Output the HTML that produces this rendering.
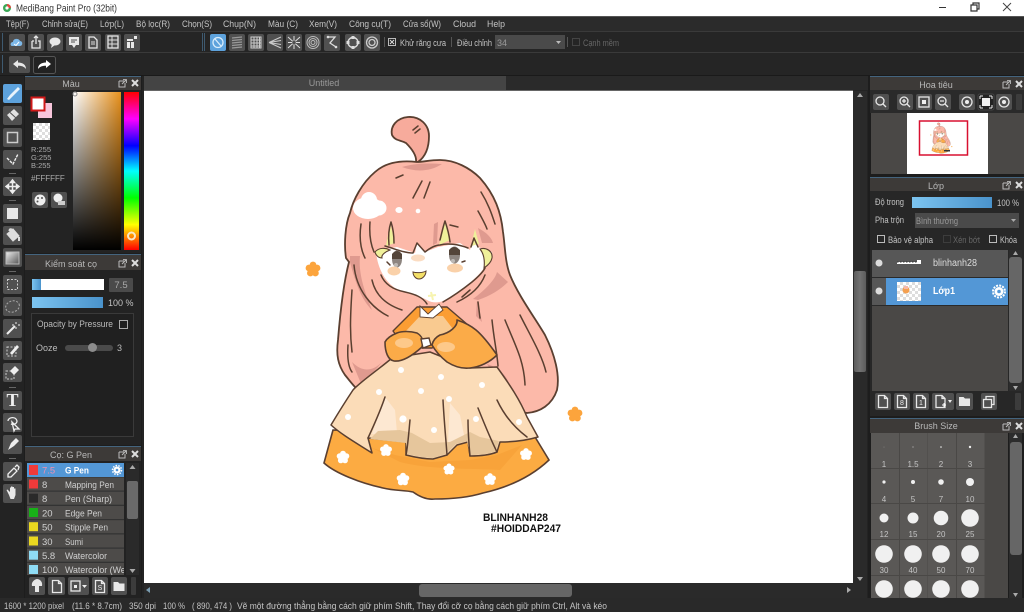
<!DOCTYPE html>
<html lang="vi"><head><meta charset="utf-8"><title>MediBang Paint Pro</title>
<style>
html,body{margin:0;padding:0;width:1024px;height:612px;overflow:hidden;background:#252525}
svg{display:block}
body>svg{filter:blur(.3px)}
text{font-family:"Liberation Sans","Noto Sans CJK JP",sans-serif;font-size:9px;fill:#c4c4c4}
.m{text-anchor:middle}
.t{fill:#b8b8b8;font-size:9px;text-anchor:middle}
.ic{fill:none;stroke:#e8e8e8;stroke-width:1.3}
.f{fill:#e8e8e8;stroke:none}
.l{fill:none;stroke:#5a3f30;stroke-width:1.5;stroke-linecap:round;stroke-linejoin:round}
.b{fill:#505050}
.row{fill:#4d4b49}
.n{font-size:9.5px;fill:#d0d0d0}
</style></head><body>
<svg width="1024" height="612" viewBox="0 0 1024 612" xmlns="http://www.w3.org/2000/svg">
<defs>
<linearGradient id="blue" x1="0" x2="1" y1="0" y2="0"><stop offset="0" stop-color="#7cc4f0"/><stop offset="1" stop-color="#4a93cc"/></linearGradient>
<linearGradient id="sv" x1="0" x2="1" y1="0" y2="0"><stop offset="0" stop-color="#fff"/><stop offset="1" stop-color="#e8911c"/></linearGradient>
<linearGradient id="bk" x1="0" x2="0" y1="0" y2="1"><stop offset="0" stop-color="#000" stop-opacity="0"/><stop offset="1" stop-color="#000"/></linearGradient>
<linearGradient id="hue" x1="0" x2="0" y1="0" y2="1"><stop offset="0" stop-color="#f00"/><stop offset=".17" stop-color="#f0f"/><stop offset=".34" stop-color="#00f"/><stop offset=".5" stop-color="#0ff"/><stop offset=".67" stop-color="#0f0"/><stop offset=".84" stop-color="#ff0"/><stop offset="1" stop-color="#f00"/></linearGradient>
<linearGradient id="gr" x1="0" x2="1" y1="0" y2="1"><stop offset="0" stop-color="#eee"/><stop offset="1" stop-color="#555"/></linearGradient>
<linearGradient id="th" x1="0" x2="1" y1="0" y2="0"><stop offset="0" stop-color="#5c5c5c"/><stop offset=".5" stop-color="#727272"/><stop offset="1" stop-color="#5c5c5c"/></linearGradient>
<pattern id="chk" width="6" height="6" patternUnits="userSpaceOnUse"><rect width="6" height="6" fill="#fff"/><rect width="3" height="3" fill="#ddd"/><rect x="3" y="3" width="3" height="3" fill="#ddd"/></pattern>
<g id="popx"><path d="M0 2H5M0 2V8H6V4" fill="none" stroke="#bbb" stroke-width="1"/><path d="M3 5L7 1M4 0.6H7.4V4" fill="none" stroke="#bbb" stroke-width="1"/><path d="M13 1L19 7M19 1L13 7" stroke="#ddd" stroke-width="2"/></g>
<g id="flower"><circle cx="0" cy="-4" r="3.4"/><circle cx="4" cy="-1" r="3.4"/><circle cx="2.4" cy="4" r="3.4"/><circle cx="-2.6" cy="4" r="3.4"/><circle cx="-4" cy="-1" r="3.4"/><circle r="3"/></g>
<g id="page"><path d="M4 2.5H10L13 5.5V14.5H4Z M10 2.5V5.5H13" class="ic"/></g>
<g id="folder"><path class="f" d="M3 4H7.5L9 5.5H14V13H3Z"/></g>

<g id="art">
  <!-- ahoge -->
  <path d="M416 162C417 155 411 148 406 143C401 140 395 141 392 135C390 126 397 118 408 117C420 116 429 125 429 136C429 148 425 157 418 162Z" fill="#f7ab9c" stroke="#5a3f30" stroke-width="1.8"/>
  <path d="M413 130L418 126M415 133L420 129" class="l" stroke-width="1"/>
  <!-- hair -->
  <path d="M417 162C400 160 385 163 375 172C362 183 353 200 350 213C345 225 344 245 346 258L349 262C343 285 340 315 338 340C336 355 338 365 345 375C350 381 352 384 356 388L527 413C540 412 552 405 557 390C560 375 555 355 545 335C535 318 518 295 510 275C505 262 505 245 503 232C501 212 495 195 480 178C470 168 455 160 440 160C430 160 423 162 417 162Z" fill="#fcb9a9" stroke="#5a3f30" stroke-width="1.8"/>
  <path d="M402 167C415 172 430 172 442 164C430 163 415 163 402 167ZM352 362C362 372 372 372 382 362L362 386ZM487 364C500 368 510 378 510 390L495 378ZM350 256L360 256C358 275 366 295 372 310C362 300 356 285 350 262ZM473 299C485 290 495 280 497 272L508 282C500 290 490 296 478 300ZM477 300L482 322L476 316ZM434 224L438 222L437 243L433 245ZM478 228C486 232 492 238 493 243L482 243Z" fill="#df9a8f"/>
  <!-- hair strands -->
  <path class="l" d="M396 178L403 175M413 198L422 181M424 198L430 182M481 192C489 205 492 215 495 224M478 211C483 220 486 226 487 229M361 224C359 238 361 250 365 258M370 222C369 235 371 245 374 252M354 265C356 290 372 308 388 316M372 280C376 298 390 306 402 310M352 290C350 320 350 335 352 352M348 345C347 360 349 368 352 372M492 320C494 340 497 352 498 366M505 320C515 345 524 360 525 385M520 315C530 335 542 355 546 372M478 302L480 318M470 290L462 297M485 275C480 288 470 296 457 302"/>
  <!-- skirt bottom -->
  <path d="M333 430L324 463C335 473 360 483 383 488C395 491 405 490 413 492C420 497 428 500 435 499C455 499 470 497 483 493C505 488 530 478 549 460L532 432Z" fill="#fcab42" stroke="#5a3f30" stroke-width="1.6"/>
  <path d="M372 448L395 455L430 462L470 460L497 455L522 445L500 470C470 468 430 470 400 462Z" fill="#f59f36" opacity=".6"/>
  <!-- skirt -->
  <path d="M392 358C378 370 360 382 353 390C345 402 337 415 331 425C342 435 358 444 372 453L368 438L406 442L406 455C418 458 428 459 433 459L447 455L457 445L468 442L470 456C480 456 490 455 497 452L500 442C515 442 528 440 538 437L527 417C520 400 510 385 497 367L470 368L430 352Z" fill="#fbdcb8" stroke="#5a3f30" stroke-width="1.5" stroke-linejoin="round"/>
  <path d="M385 397L372 434L397 433L395 410ZM450 403L448 442L465 440L460 415Z" fill="#fde8d2"/>
  <path d="M370 439L406 443L407 454C418 457 428 458 433 458L446 454L456 444L467 441L470 455C480 455 490 454 496 451C497 447 498 444 499 441L480 437L470 432L450 442L430 443L412 433L400 430L378 431Z" fill="#e6c69c"/>
  <path class="l" stroke-width="1.2" d="M385 397C380 412 374 425 368 438M410 420C409 430 408 445 406 455M443 400C444 420 446 440 447 455M468 420C468 432 469 445 470 456M478 408C484 423 490 438 497 452M497 400C504 415 515 428 527 437"/>
  <!-- flowers skirt -->
  <g fill="#fff"><use href="#flower" transform="translate(343 457) scale(.85)"/><use href="#flower" transform="translate(386 450) scale(.8)"/><use href="#flower" transform="translate(449 469) scale(.75)"/><use href="#flower" transform="translate(403 479) scale(.85)"/><use href="#flower" transform="translate(490 479) scale(.8)"/><use href="#flower" transform="translate(526 454) scale(.8)"/>
  <circle cx="401" cy="370" r="3"/><circle cx="441" cy="377" r="3"/><circle cx="482" cy="385" r="3"/><circle cx="379" cy="392" r="3"/><circle cx="421" cy="391" r="3"/><circle cx="449" cy="399" r="3"/><circle cx="348" cy="417" r="3"/><circle cx="403" cy="419" r="3.6"/><circle cx="476" cy="419" r="3"/><circle cx="434" cy="430" r="3"/><circle cx="519" cy="422" r="3"/></g>
  <!-- shoulders and torso -->
  <path d="M417 307L393 331L400 340L422 348L432 348L457 335L475 331L447 307Z" fill="#fb9d33" stroke="#5a3f30" stroke-width="1.4" stroke-linejoin="round"/>
  <path d="M420 316L443 316L456 333L434 345L422 345L405 332Z" fill="#f9ca90"/>
  <path d="M420 306L428 314L439 304L443 310L433 318L420 317Z" fill="#fff" stroke="#5a3f30" stroke-width=".9"/>
  <!-- sleeves -->
  <path d="M385 342C385 352 388 360 394 361C402 362 412 356 422 347C424 340 422 336 417 333C410 331 402 331 397 333C392 335 387 338 385 342Z" fill="#fbab48" stroke="#5a3f30" stroke-width="1.6" stroke-linejoin="round"/>
  <path d="M432 345C436 352 442 358 447 362C455 367 462 369 470 368C480 367 490 362 497 355C490 345 482 335 476 330C470 325 463 322 457 320C458 326 450 333 440 335C436 337 433 340 432 345Z" fill="#fbab48" stroke="#5a3f30" stroke-width="1.6" stroke-linejoin="round"/>
  <ellipse cx="404" cy="343" rx="9" ry="5" fill="#fdc98a"/><ellipse cx="446" cy="347" rx="9" ry="5" fill="#fdc98a"/>
  <path d="M421 339L429 338L431 345L423 348Z" fill="#fff" stroke="#5a3f30" stroke-width="1.4"/>
  <!-- face -->
  <path d="M376 251L397 247L415 253L417 243L425 252L438 247L460 243L470 250L474 238L478 247L492 252C493 260 488 266 484 268C476 280 455 295 443 301C438 303 432 303 427 300C418 295 405 293 395 288C383 280 377 265 376 251Z" fill="#fff"/>
  <path d="M375 252C379 247 386 248 390 250C385 252 381 255 382 258C379 258 376 256 375 252ZM480 249C486 247 493 251 492 258C491 263 487 266 484 268C485 260 484 254 480 249Z" fill="#eff09a" stroke="#5a3f30" stroke-width="1.1"/>
  <path d="M390 223L395 243L386 246ZM445 221L450 240L439 245ZM475 229L479 244L471 246Z" fill="#eff09a"/>
  <path d="M385 246C393 248 403 253 413 253L417 243L425 252C430 248 436 245 440 245C447 243 458 244 468 248M471 247L474 238L478 247" class="l" stroke-width="1.6"/>
  <path d="M389 245C388 235 389 228 391 222M394 243C394 235 393 228 391 222M440 240C442 232 443 227 445 221M450 242C449 233 447 227 445 221M450 225L458 227" class="l" stroke-width="1.1"/>
  <!-- eyes -->
  <ellipse cx="397" cy="259" rx="5" ry="8.500" fill="#8d8580"/><path d="M392 254C395 250 399 250 402 254L402 259L392 259Z" fill="#54453a"/><circle cx="396" cy="265" r="2" fill="#bdb9b5"/>
  <ellipse cx="454.500" cy="255" rx="5.500" ry="8.500" fill="#8d8580"/><path d="M449 250C452 246 456 246 460 250L460 255L449 255Z" fill="#54453a"/><circle cx="453" cy="261" r="2" fill="#bdb9b5"/>
  <path d="M387 262L390 265M462 262L465 261" class="l" stroke-width="1"/>
  <ellipse cx="394" cy="271" rx="6.500" ry="4.500" fill="#fad1a9"/><ellipse cx="455" cy="268" rx="8" ry="4.500" fill="#fad1a9"/><ellipse cx="418" cy="258" rx="7" ry="3.500" fill="#fbdcc2"/>
  <path d="M413 272C416 273 423 273 426 271C426 276 422 279 419 279C416 279 413 276 413 272Z" fill="#f4e068" stroke="#5a3f30" stroke-width="1"/>
  <path d="M431 292L433 300M428 296L436 295" stroke="#f7f4b0" stroke-width="2"/>
  <!-- face border locks -->
  <path class="l" stroke-width="1.6" d="M381 275C385 285 395 290 405 292C414 294 423 297 427 304M443 302C450 298 462 290 472 282C478 277 483 272 485 268"/>
  <!-- highlights -->
  <g fill="#fff"><ellipse cx="368" cy="208" rx="15" ry="11"/><circle cx="369" cy="200" r="8"/><circle cx="379" cy="208" r="7.500"/><ellipse cx="399" cy="210" rx="3.600" ry="3"/><circle cx="418" cy="211" r="2.300"/></g>
  <use href="#flower" fill="#fca43c" transform="translate(313 269)"/>
  <use href="#flower" fill="#fca43c" transform="translate(575 414)"/>
</g>
</defs>

<rect width="1024" height="612" fill="#242424"/>
<!-- title bar -->
<rect width="1024" height="16" fill="#fff"/>
<circle cx="7" cy="8" r="4" fill="#3aa856"/><path d="M7 4A4 4 0 0 1 11 8L7 8Z" fill="#e0483e"/><circle cx="7" cy="8" r="1.6" fill="#fff"/>
<text x="16" y="11.5" textLength="101" lengthAdjust="spacingAndGlyphs" style="font-size:10px;fill:#333">MediBang Paint Pro (32bit)</text>
<path d="M939 7.5H946" stroke="#333" stroke-width="1"/>
<path d="M971 5H977V11H971ZM973 5V3H979V9H977" fill="none" stroke="#333" stroke-width="1.2"/>
<path d="M1003 3L1011 11M1011 3L1003 11" stroke="#444" stroke-width="1"/>

<!-- menu -->
<rect y="16" width="1024" height="1" fill="#555"/>
<rect y="17" width="1024" height="15" fill="#2b2b2b"/>
<rect y="31" width="1024" height="1" fill="#3a3a3a"/>
<text x="6" y="27" textLength="23" lengthAdjust="spacingAndGlyphs" style="font-size:9.5px">Tệp(F)</text>
<text x="42" y="27" textLength="46" lengthAdjust="spacingAndGlyphs" style="font-size:9.5px">Chỉnh sửa(E)</text>
<text x="100" y="27" textLength="24" lengthAdjust="spacingAndGlyphs" style="font-size:9.5px">Lớp(L)</text>
<text x="136" y="27" textLength="34" lengthAdjust="spacingAndGlyphs" style="font-size:9.5px">Bộ lọc(R)</text>
<text x="182" y="27" textLength="30" lengthAdjust="spacingAndGlyphs" style="font-size:9.5px">Chọn(S)</text>
<text x="223" y="27" textLength="33" lengthAdjust="spacingAndGlyphs" style="font-size:9.5px">Chụp(N)</text>
<text x="268" y="27" textLength="30" lengthAdjust="spacingAndGlyphs" style="font-size:9.5px">Màu (C)</text>
<text x="309" y="27" textLength="28" lengthAdjust="spacingAndGlyphs" style="font-size:9.5px">Xem(V)</text>
<text x="349" y="27" textLength="42" lengthAdjust="spacingAndGlyphs" style="font-size:9.5px">Công cụ(T)</text>
<text x="403" y="27" textLength="38" lengthAdjust="spacingAndGlyphs" style="font-size:9.5px">Cửa sổ(W)</text>
<text x="453" y="27" textLength="23" lengthAdjust="spacingAndGlyphs" style="font-size:9.5px">Cloud</text>
<text x="487" y="27" textLength="18" lengthAdjust="spacingAndGlyphs" style="font-size:9.5px">Help</text>

<!-- toolbar row 1 -->
<rect y="32" width="1024" height="20" fill="#252525"/>
<rect y="52" width="1024" height="1" fill="#3a3a3a"/>
<rect x="2" y="33" width="1" height="18" fill="#3e5a70"/><rect x="202" y="33" width="1" height="18" fill="#3e5a70"/><rect x="204" y="33" width="1" height="18" fill="#3e5a70"/>
<rect x="9" y="34" width="16" height="17" rx="2" class="b"/><rect x="28" y="34" width="16" height="17" rx="2" class="b"/><rect x="47" y="34" width="16" height="17" rx="2" class="b"/><rect x="66" y="34" width="16" height="17" rx="2" class="b"/><rect x="85" y="34" width="16" height="17" rx="2" class="b"/><rect x="105" y="34" width="16" height="17" rx="2" class="b"/><rect x="124" y="34" width="16" height="17" rx="2" class="b"/>
<path d="M12 46C10 46 10 42 13 42C13 38 19 38 20 41C23 41 23 46 20 46Z" fill="#7db8e8"/><path d="M14 44L16 45.5L19 42" stroke="#fff" fill="none"/>
<path d="M32 41H34M38 41H40V48H32V41M36 44V36M34 38L36 36L38 38" class="ic" stroke-width="1.1"/>
<ellipse cx="55" cy="41.5" rx="5.5" ry="4" class="f"/><path class="f" d="M52 44L51 48L55 45Z"/>
<rect x="69" y="37" width="10" height="8" class="f"/><path class="f" d="M72 45L74 48L76 45Z"/><path d="M71 40H77M71 42H75" stroke="#505050"/>
<path d="M89 37H94L97 40V48H89Z" class="ic" stroke-width="1.1"/><path d="M91 42H95M91 44H95" stroke="#ddd"/>
<rect x="108" y="36" width="10" height="12" class="ic" stroke-width="1"/><path d="M108 40H118M108 44H118M112 36V48" stroke="#ddd" stroke-width="1"/>
<path class="f" d="M127 39H133V41H127ZM127 42H130V48H127ZM131 42H134V48H131ZM134 36L137 36L137 39L134 39Z"/>

<rect x="210" y="34" width="16" height="17" rx="2" fill="#5da2dc"/><circle cx="218" cy="42.5" r="5" fill="none" stroke="#d8ecfb" stroke-width="1.3"/><path d="M215 39L221 46" stroke="#d8ecfb" stroke-width="1.3"/>
<rect x="229" y="34" width="16" height="17" rx="2" class="b"/><path d="M232 38L242 37M232 40.5L242 39.5M232 43L242 42M232 45.5L242 44.5M232 48L242 47" stroke="#999" stroke-width="1.2"/>
<rect x="248" y="34" width="16" height="17" rx="2" class="b"/><path d="M251 37H261V48H251ZM251 40H261M251 43H261M251 46H261M254 37V48M257 37V48M259.5 37V48" fill="none" stroke="#ccc" stroke-width="1"/>
<rect x="267" y="34" width="16" height="17" rx="2" class="b"/><path d="M269 42.5L281 37M269 42.5L281 40.5M269 42.5L281 44.5M269 42.5L281 48" stroke="#ccc"/>
<rect x="286" y="34" width="16" height="17" rx="2" class="b"/><path d="M288 37L300 48M300 37L288 48M294 36V49M288 42.5H300" stroke="#ddd"/><circle cx="294" cy="42.5" r="1.8" fill="#505050"/>
<rect x="305" y="34" width="16" height="17" rx="2" class="b"/><circle cx="313" cy="42.5" r="6" fill="none" stroke="#bbb"/><circle cx="313" cy="42.5" r="4" fill="none" stroke="#bbb"/><circle cx="313" cy="42.5" r="2" fill="none" stroke="#bbb"/>
<rect x="324" y="34" width="16" height="17" rx="2" class="b"/><path d="M328 37H335L330 43L336 47" fill="none" stroke="#ddd" stroke-width="1.3"/><circle cx="328" cy="37" r="1.3" fill="#ddd"/><circle cx="336" cy="47" r="1.3" fill="#ddd"/>
<rect x="345" y="34" width="16" height="17" rx="2" class="b"/><circle cx="353" cy="42.5" r="5" fill="none" stroke="#ddd" stroke-width="1.4"/><g fill="#ddd"><rect x="351.5" y="36" width="3" height="3"/><rect x="351.5" y="46" width="3" height="3"/><rect x="346.5" y="41" width="3" height="3"/><rect x="356.5" y="41" width="3" height="3"/></g>
<rect x="364" y="34" width="16" height="17" rx="2" class="b"/><circle cx="372" cy="42.5" r="5.5" fill="none" stroke="#ccc" stroke-width="1.3"/><circle cx="372" cy="42.5" r="3" fill="none" stroke="#ccc" stroke-width="1.3"/>
<rect x="384" y="37" width="1" height="10" fill="#555"/>
<rect x="388.5" y="38.5" width="7" height="7" fill="none" stroke="#bbb"/><path d="M390 40L394 44M394 40L390 44" stroke="#ddd"/>
<text x="400" y="46" textLength="46" lengthAdjust="spacingAndGlyphs" style="font-size:9px">Khử răng cưa</text>
<rect x="451" y="37" width="1" height="10" fill="#555"/>
<text x="457" y="46" textLength="35" lengthAdjust="spacingAndGlyphs" style="font-size:9px">Điều chỉnh</text>
<rect x="495" y="35" width="70" height="14" fill="#4a4a4a"/><text x="497" y="46" style="fill:#999">34</text><path d="M556 41H561L558.5 44Z" fill="#bbb"/>
<rect x="567" y="37" width="1" height="10" fill="#555"/>
<rect x="572.5" y="38.5" width="7" height="7" fill="none" stroke="#444"/>
<text x="583" y="46" textLength="36" lengthAdjust="spacingAndGlyphs" style="font-size:9px;fill:#666">Cạnh mềm</text>

<!-- toolbar row 2 -->
<rect y="53" width="1024" height="22" fill="#252525"/>
<rect x="2" y="55" width="1" height="18" fill="#3e5a70"/>
<rect x="9" y="56" width="21" height="17" rx="2" class="b"/>
<path class="f" d="M13 64L18 60V62.5C23 62.5 26 65 26 69C24 66.5 21.5 65.8 18 65.8V68Z"/>
<rect x="33.5" y="56.5" width="22" height="17" rx="2" fill="#222" stroke="#555"/>
<path d="M51 64L46 60V62.5C41 62.5 38 65 38 69C40 66.5 42.5 65.8 46 65.8V68Z" fill="#fff"/>
<rect y="75" width="1024" height="1" fill="#1a1a1a"/>

<!-- tools column -->
<rect x="0" y="76" width="24" height="522" fill="#232323"/>
<rect x="3" y="84" width="19" height="19" rx="2" fill="#5da2dc"/>
<path d="M7 99L10 95L18 87L20 89L12 97L9 100Z" fill="#e8f3fb"/>
<g class="b">
<rect x="3" y="106" width="19" height="19" rx="2"/><rect x="3" y="128" width="19" height="19" rx="2"/><rect x="3" y="150" width="19" height="19" rx="2"/><rect x="3" y="177" width="19" height="19" rx="2"/><rect x="3" y="204" width="19" height="19" rx="2"/><rect x="3" y="226" width="19" height="19" rx="2"/><rect x="3" y="248" width="19" height="19" rx="2"/><rect x="3" y="275" width="19" height="19" rx="2"/><rect x="3" y="297" width="19" height="19" rx="2"/><rect x="3" y="319" width="19" height="19" rx="2"/><rect x="3" y="341" width="19" height="19" rx="2"/><rect x="3" y="363" width="19" height="19" rx="2"/><rect x="3" y="391" width="19" height="19" rx="2"/><rect x="3" y="413" width="19" height="19" rx="2"/><rect x="3" y="435" width="19" height="19" rx="2"/><rect x="3" y="462" width="19" height="19" rx="2"/><rect x="3" y="484" width="19" height="19" rx="2"/>
</g>
<g fill="#666"><rect x="9" y="173" width="7" height="1"/><rect x="9" y="200" width="7" height="1"/><rect x="9" y="271" width="7" height="1"/><rect x="9" y="387" width="7" height="1"/><rect x="9" y="458" width="7" height="1"/></g>
<path d="M7 115L14 109L19 114L12 121ZM7 115L12 121" fill="#e0e0e0"/><path d="M10 112.5L16 118" stroke="#505050"/>
<rect x="7.5" y="132.5" width="10" height="10" fill="none" stroke="#ccc" stroke-width="1.5"/>
<path d="M7 158L10 161L13 164L18 154" fill="none" stroke="#eee" stroke-width="1.4" stroke-dasharray="3 1"/>
<path d="M12.5 180V193M6 186.5H19M12.5 180L10.5 182.5H14.5ZM12.5 193L10.5 190.5H14.5ZM6 186.5L8.5 184.5V188.5ZM19 186.5L16.5 184.5V188.5Z" stroke="#eee" stroke-width="1.5" fill="#eee"/>
<rect x="7" y="208" width="11" height="11" fill="#e8e8e8"/>
<path d="M7 234L13 229L19 236L13 241ZM9 231C9 228 12 228 13 231" fill="#ddd" stroke="#ddd"/><path d="M19 237V241" stroke="#ddd" stroke-width="2"/>
<rect x="6" y="252" width="13" height="12" fill="url(#gr)" stroke="#bbb"/>
<rect x="7.5" y="279.5" width="10" height="10" fill="none" stroke="#ccc" stroke-dasharray="2 1.5"/>
<ellipse cx="12.5" cy="306.5" rx="7" ry="5.5" fill="none" stroke="#aaa" stroke-dasharray="2 1.5" transform="rotate(-20 12.5 306.5)"/>
<path d="M7 334L15 326" stroke="#eee" stroke-width="2"/><path d="M16 322V324M16 327V329M12 325H14M18 325H20" stroke="#eee"/>
<rect x="7" y="347" width="9" height="9" fill="none" stroke="#ccc" stroke-dasharray="2 1.5"/><path d="M10 353L17 345L19 347L12 355Z" fill="#eee"/>
<rect x="6" y="371" width="8" height="8" fill="none" stroke="#ccc" stroke-dasharray="2 1.5"/><path d="M10 371L15 366L19 370L14 375Z" fill="#eee"/>
<text x="12.5" y="406" style="font-family:'Liberation Serif',serif;font-weight:bold;font-size:18px;fill:#f0f0f0;text-anchor:middle">T</text>
<path d="M8 421C8 417 16 416 17 421C17 424 13 425 11 424M12 422L19 429L15 429L14 431Z" fill="none" stroke="#eee" stroke-width="1.3"/>
<path d="M8 450L11 443L16 438L19 441L14 446Z" fill="#eee"/>
<path d="M8 477L8 474L14 468L17 471L11 477ZM15 467L17 465L19 467L18 470" fill="none" stroke="#eee" stroke-width="1.3"/>
<path class="f" d="M9 495L6.5 490L7.5 489.5L10 492V487.5H11V491.5V486.5H12.5V491.5V487H14V492V488.5H15.5V495L14 499H10.5Z"/>

<!-- left panels -->
<rect x="24" y="76" width="118" height="522" fill="#1d1d1d"/>
<rect x="25" y="76" width="116" height="1" fill="#44647e"/>
<rect x="25" y="77" width="116" height="13" fill="#3d3a38"/>
<text class="t" x="71" y="87">Màu</text><use href="#popx" x="119" y="79"/>
<rect x="25" y="90" width="116" height="163" fill="#232323"/>
<rect x="38" y="103" width="14" height="15" fill="#f8c6dc"/>
<rect x="31.5" y="97.5" width="13" height="13" fill="#fff" stroke="#d01818" stroke-width="2"/>
<rect x="33" y="123" width="17" height="17" fill="url(#chk)"/>
<text x="31" y="152" style="font-size:7.5px;fill:#aaa">R:255</text><text x="31" y="160" style="font-size:7.5px;fill:#aaa">G:255</text><text x="31" y="168" style="font-size:7.5px;fill:#aaa">B:255</text><text x="31" y="181" style="font-size:8px;fill:#aaa">#FFFFFF</text>
<rect x="32" y="192" width="16" height="16" rx="2" class="b"/><rect x="51" y="192" width="16" height="16" rx="2" class="b"/>
<circle cx="40" cy="200" r="5.5" fill="#eee"/><circle cx="38" cy="198" r="1" fill="#555"/><circle cx="42" cy="198" r="1" fill="#555"/><circle cx="37.5" cy="201.5" r="1" fill="#555"/>
<circle cx="58" cy="198" r="4.5" fill="#eee"/><rect x="58" y="201" width="7" height="4" fill="#ccc"/>
<rect x="73" y="92" width="48" height="158" fill="url(#sv)"/><rect x="73" y="92" width="48" height="158" fill="url(#bk)"/>
<circle cx="75" cy="94" r="2" fill="none" stroke="#888"/>
<rect x="124" y="92" width="15" height="158" fill="url(#hue)"/>
<circle cx="131.5" cy="236" r="3.5" fill="none" stroke="#f7e9c8" stroke-width="2"/>

<rect x="25" y="254" width="116" height="1" fill="#44647e"/>
<rect x="25" y="255" width="116" height="15" fill="#3d3a38"/>
<text class="t" x="71" y="267">Kiểm soát cọ</text><use href="#popx" x="119" y="259"/>
<rect x="25" y="270" width="116" height="175" fill="#232323"/>
<rect x="32" y="279" width="72" height="11" fill="#fff"/><rect x="32" y="279" width="9" height="11" fill="url(#blue)"/>
<rect x="109" y="278" width="24" height="14" rx="1" fill="#4a4a4a"/><text class="m" x="121" y="288" style="font-size:9.5px;fill:#aaa">7.5</text>
<rect x="32" y="297" width="71" height="11" fill="url(#blue)"/><text x="108" y="306" style="font-size:9px">100 %</text>
<rect x="31.5" y="313.5" width="102" height="123" fill="#202020" stroke="#3a3a3a"/>
<text x="37" y="327" textLength="76" lengthAdjust="spacingAndGlyphs" style="font-size:9px;fill:#bbb">Opacity by Pressure</text>
<rect x="119.5" y="320.5" width="8" height="8" fill="none" stroke="#aaa"/>
<text x="36" y="351" style="font-size:9px;fill:#bbb">Ooze</text>
<rect x="65" y="345" width="48" height="6" rx="3" fill="#4a4a4a"/><circle cx="92.5" cy="347.5" r="4.5" fill="#8c8c8c"/>
<text x="117" y="351" style="font-size:9px;fill:#bbb">3</text>

<rect x="25" y="446" width="116" height="1" fill="#44647e"/>
<rect x="25" y="447" width="116" height="14" fill="#3d3a38"/>
<text class="t" x="71" y="458">Cọ: G Pen</text><use href="#popx" x="119" y="450"/>
<rect x="25" y="461" width="116" height="137" fill="#222"/>
<rect x="27" y="463" width="97" height="112" fill="#333"/>
<g class="row"><rect x="27" y="477.5" width="97" height="13"/><rect x="27" y="491.7" width="97" height="13"/><rect x="27" y="506" width="97" height="13"/><rect x="27" y="520.2" width="97" height="13"/><rect x="27" y="534.5" width="97" height="13"/><rect x="27" y="548.7" width="97" height="13"/><rect x="27" y="563" width="97" height="12"/></g>
<rect x="27" y="463" width="97" height="14" fill="#5397d6"/>
<rect x="29" y="465" width="9" height="10" fill="#f03a3a"/><rect x="29" y="479.5" width="9" height="9" fill="#f03a3a"/><rect x="29" y="493.7" width="9" height="9" fill="#2a2a2a"/><rect x="29" y="508" width="9" height="9" fill="#18b018"/><rect x="29" y="522.2" width="9" height="9" fill="#ead820"/><rect x="29" y="536.5" width="9" height="9" fill="#ead820"/><rect x="29" y="550.7" width="9" height="9" fill="#8fdcf5"/><rect x="29" y="565" width="9" height="9" fill="#8fdcf5"/>
<text x="42" y="473.5" class="n" style="fill:#f090b0">7.5</text><text x="65" y="473.5" class="n" textLength="24" lengthAdjust="spacingAndGlyphs" style="fill:#fff;font-weight:bold">G Pen</text>
<text x="42" y="488" class="n">8</text><text x="65" y="488" class="n" textLength="49" lengthAdjust="spacingAndGlyphs">Mapping Pen</text>
<text x="42" y="502" class="n">8</text><text x="65" y="502" class="n" textLength="47" lengthAdjust="spacingAndGlyphs">Pen (Sharp)</text>
<text x="42" y="516.5" class="n">20</text><text x="65" y="516.5" class="n" textLength="37" lengthAdjust="spacingAndGlyphs">Edge Pen</text>
<text x="42" y="530.5" class="n">50</text><text x="65" y="530.5" class="n" textLength="43" lengthAdjust="spacingAndGlyphs">Stipple Pen</text>
<text x="42" y="545" class="n">30</text><text x="65" y="545" class="n" textLength="18" lengthAdjust="spacingAndGlyphs">Sumi</text>
<text x="42" y="559" class="n">5.8</text><text x="65" y="559" class="n" textLength="42" lengthAdjust="spacingAndGlyphs">Watercolor</text>
<svg x="27" y="563" width="97" height="12" viewBox="27 563 97 12"><text x="42" y="573" class="n">100</text><text x="65" y="573" class="n" textLength="66" lengthAdjust="spacingAndGlyphs">Watercolor (Wet)</text></svg>
<circle cx="117" cy="470" r="3.5" fill="#fff"/><circle cx="117" cy="470" r="4.5" fill="none" stroke="#fff" stroke-dasharray="1.5 1.3" stroke-width="1.5"/><circle cx="117" cy="470" r="1.3" fill="#5397d6"/>
<rect x="126" y="463" width="13" height="112" fill="#2a2a2a"/><path d="M132.5 465L129.5 469H135.5Z" fill="#aaa"/><path d="M132.5 573L129.5 569H135.5Z" fill="#aaa"/>
<rect x="127" y="481" width="11" height="38" rx="2" fill="#6a6a6a"/>
<rect x="29" y="577" width="16" height="18" rx="2" class="b"/><rect x="48" y="577" width="17" height="18" rx="2" class="b"/><rect x="68" y="577" width="21" height="18" rx="2" class="b"/><rect x="92" y="577" width="16" height="18" rx="2" class="b"/><rect x="111" y="577" width="16" height="18" rx="2" class="b"/><rect x="131" y="577" width="5" height="18" rx="1" fill="#3c3c3c"/>
<path class="f" d="M32 586C31 581 36 579 37 579C39 579 43 581 42 586H39V592H35V586Z"/>
<use href="#page" x="48.5" y="578"/>
<rect x="71" y="581" width="9" height="10" class="ic" stroke-width="1"/><rect x="74" y="585" width="3" height="3" fill="#eee"/><path d="M82 585H87L84.5 588Z" fill="#eee"/>
<use href="#page" x="91.5" y="578"/><text x="100" y="590" class="m" style="font-size:7px;fill:#eee">S</text>
<use href="#folder" x="110.5" y="578"/>

<!-- canvas area -->
<rect x="142" y="76" width="728" height="522" fill="#232323"/>
<rect x="144" y="76" width="362" height="14" fill="#444"/>
<text class="t" x="324" y="86" style="fill:#999">Untitled</text>
<rect x="506" y="76" width="362" height="14" fill="#2a2a2a"/>
<rect x="144" y="90" width="709" height="1" fill="#666"/>
<rect x="144" y="91" width="709" height="492" fill="#fff"/>
<use href="#art"/>
<text x="483" y="521" textLength="65" lengthAdjust="spacingAndGlyphs" style="font-size:11px;font-weight:bold;fill:#111">BLINHANH28</text>
<text x="491" y="532" textLength="70" lengthAdjust="spacingAndGlyphs" style="font-size:11px;font-weight:bold;fill:#111">#HOIDDAP247</text>

<rect x="853" y="91" width="14" height="492" fill="#2a2a2a"/>
<path d="M860 93L857 97H863Z" fill="#aaa"/><path d="M860 581L857 577H863Z" fill="#aaa"/>
<rect x="854" y="271" width="12" height="101" rx="2" fill="url(#th)"/>
<rect x="144" y="583" width="723" height="15" fill="#2a2a2a"/>
<path d="M146 590L150 587V593Z" fill="#7a9cb0"/><path d="M851 590L847 587V593Z" fill="#aaa"/>
<rect x="419" y="584" width="153" height="13" rx="3" fill="#666"/>

<!-- status -->
<rect y="598" width="1024" height="14" fill="#292929"/>
<text x="4" y="609" textLength="60" lengthAdjust="spacingAndGlyphs" style="font-size:9px">1600 * 1200 pixel</text>
<text x="72" y="609" textLength="50" lengthAdjust="spacingAndGlyphs" style="font-size:9px">(11.6 * 8.7cm)</text>
<text x="129" y="609" textLength="27" lengthAdjust="spacingAndGlyphs" style="font-size:9px">350 dpi</text>
<text x="163" y="609" textLength="22" lengthAdjust="spacingAndGlyphs" style="font-size:9px">100 %</text>
<text x="192" y="609" textLength="40" lengthAdjust="spacingAndGlyphs" style="font-size:9px">( 890, 474 )</text>
<text x="237" y="609" textLength="370" lengthAdjust="spacingAndGlyphs" style="font-size:9px">Vẽ một đường thẳng bằng cách giữ phím Shift, Thay đổi cỡ cọ bằng cách giữ phím Ctrl, Alt và kéo</text>

<!-- right panels -->
<rect x="868" y="76" width="156" height="522" fill="#1d1d1d"/>
<rect x="870" y="76" width="154" height="1" fill="#44647e"/>
<rect x="870" y="77" width="154" height="13" fill="#3d3a38"/>
<text class="t" x="936" y="88">Hoa tiêu</text><use href="#popx" x="1003" y="80"/>
<rect x="870" y="90" width="154" height="23" fill="#2a2a2a"/>
<rect x="873" y="94" width="16" height="16" rx="2" class="b"/><rect x="897" y="94" width="16" height="16" rx="2" class="b"/><rect x="916" y="94" width="16" height="16" rx="2" class="b"/><rect x="935" y="94" width="16" height="16" rx="2" class="b"/><rect x="959" y="94" width="16" height="16" rx="2" class="b"/><rect x="978" y="94" width="16" height="16" rx="2" fill="#222" stroke="#444"/><rect x="996" y="94" width="16" height="16" rx="2" class="b"/><rect x="1016" y="94" width="6" height="16" rx="1" fill="#3c3c3c"/>
<circle cx="880" cy="101" r="4" class="ic"/><path d="M883 104L886 107" class="ic" stroke-width="2"/>
<circle cx="904" cy="101" r="4" class="ic"/><path d="M907 104L910 107M902 101H906M904 99V103" class="ic"/>
<rect x="919" y="97" width="10" height="10" class="ic" stroke-width="1"/><rect x="922" y="100" width="4" height="4" fill="#eee"/>
<circle cx="942" cy="101" r="4" class="ic"/><path d="M945 104L948 107M940 101H944" class="ic"/>
<circle cx="967" cy="102" r="5" class="ic" stroke-width="1.6"/><circle cx="967" cy="102" r="2" fill="#eee"/>
<rect x="982" y="98" width="8" height="8" fill="#f0f0f0"/><path d="M980 96H983M980 96V99M992 96H989M992 96V99M980 108H983M980 108V105M992 108H989M992 108V105" stroke="#eee"/>
<circle cx="1004" cy="102" r="5" class="ic" stroke-width="1.6"/><circle cx="1004" cy="102" r="2" fill="#eee"/>
<rect x="871" y="113" width="153" height="61" fill="#4a4846"/>
<rect x="907" y="113" width="81" height="61" fill="#fff"/>
<svg x="907" y="113" width="81" height="61" viewBox="907 113 81 61"><use href="#art" transform="translate(905.8 113.4) scale(.08)"/></svg>
<rect x="944" y="150" width="6" height="1.5" fill="#333"/>
<rect x="919.5" y="121" width="48" height="34" fill="none" stroke="#d81030" stroke-width="1.5"/>

<rect x="870" y="177" width="154" height="1" fill="#44647e"/>
<rect x="870" y="178" width="154" height="13" fill="#3d3a38"/>
<text class="t" x="936" y="189">Lớp</text><use href="#popx" x="1003" y="181"/>
<rect x="870" y="191" width="154" height="225" fill="#272727"/>
<text x="875" y="205" textLength="29" lengthAdjust="spacingAndGlyphs" style="font-size:9px">Độ trong</text>
<rect x="912" y="197" width="80" height="11" fill="url(#blue)"/>
<text x="997" y="206" textLength="22" lengthAdjust="spacingAndGlyphs" style="font-size:9px">100 %</text>
<text x="875" y="223" textLength="29" lengthAdjust="spacingAndGlyphs" style="font-size:9px">Pha trộn</text>
<rect x="915" y="213" width="104" height="15" fill="#4a4a4a"/><text x="916" y="224" textLength="42" lengthAdjust="spacingAndGlyphs" style="fill:#999">Bình thường</text><path d="M1011 219H1016L1013.5 222Z" fill="#aaa"/>
<rect x="877.5" y="235.5" width="7" height="7" fill="none" stroke="#bbb"/><text x="888" y="243" textLength="45" lengthAdjust="spacingAndGlyphs">Bảo vệ alpha</text>
<rect x="943.5" y="235.5" width="7" height="7" fill="none" stroke="#3d3d3d"/><text x="953" y="243" textLength="27" lengthAdjust="spacingAndGlyphs" style="fill:#666">Xén bớt</text>
<rect x="989.5" y="235.5" width="7" height="7" fill="none" stroke="#bbb"/><text x="1000" y="243" textLength="17" lengthAdjust="spacingAndGlyphs">Khóa</text>

<rect x="872" y="250" width="136" height="141" fill="#4a4846"/>
<rect x="872" y="250" width="136" height="27" fill="#575757"/>
<rect x="872" y="277" width="136" height="1" fill="#2a2a2a"/>
<rect x="872" y="278" width="14" height="27" fill="#575757"/>
<rect x="886" y="278" width="122" height="27" fill="#5397d6"/>
<rect x="872" y="305" width="136" height="1" fill="#2a2a2a"/>
<circle cx="879" cy="263" r="3.5" fill="#ddd"/><circle cx="879" cy="291" r="3.5" fill="#ddd"/>
<path d="M897 263H921" stroke="#fff" stroke-width="2"/><path d="M897 262H921" stroke="#333" stroke-dasharray="1.5 1.5"/><rect x="917" y="260" width="4" height="3" fill="#fff"/>
<rect x="897" y="282" width="24" height="19" fill="url(#chk)"/><circle cx="906" cy="290" r="3.5" fill="#f4a050"/><rect x="904" y="286" width="4" height="3" fill="#f8b8a8"/>
<text x="933" y="266" textLength="44" lengthAdjust="spacingAndGlyphs" style="font-size:10px;fill:#ddd">blinhanh28</text>
<text x="933" y="294" textLength="22" lengthAdjust="spacingAndGlyphs" style="font-size:10px;fill:#fff;font-weight:bold">Lớp1</text>
<circle cx="999" cy="291.5" r="4.5" fill="#fff"/><circle cx="999" cy="291.5" r="6" fill="none" stroke="#fff" stroke-dasharray="2 1.14" stroke-width="2"/><circle cx="999" cy="291.5" r="1.8" fill="#5397d6"/>
<rect x="1009" y="250" width="13" height="141" fill="#2c2c2c"/><path d="M1015.5 251L1013 255H1018Z" fill="#aaa"/><path d="M1015.5 390L1013 386H1018Z" fill="#aaa"/>
<rect x="1009" y="257" width="13" height="126" rx="3" fill="#666"/>
<rect x="875" y="393" width="16" height="17" rx="2" class="b"/><rect x="894" y="393" width="16" height="17" rx="2" class="b"/><rect x="913" y="393" width="16" height="17" rx="2" class="b"/><rect x="932" y="393" width="22" height="17" rx="2" class="b"/><rect x="956" y="393" width="17" height="17" rx="2" class="b"/><rect x="981" y="393" width="16" height="17" rx="2" class="b"/><rect x="1015" y="393" width="6" height="17" rx="1" fill="#3c3c3c"/>
<use href="#page" x="874.5" y="393"/><use href="#page" x="893.5" y="393"/><text class="m" x="902" y="405" style="font-size:7px;fill:#eee">8</text><use href="#page" x="912.5" y="393"/><text class="m" x="921" y="405" style="font-size:7px;fill:#eee">1</text>
<use href="#page" x="932" y="393"/><path d="M942 405H946M944 403V407" stroke="#fff"/><path d="M948 400H952L950 403Z" fill="#eee"/>
<use href="#folder" x="956" y="393"/>
<rect x="983.5" y="399.5" width="8" height="8" class="ic" stroke-width="1"/><path d="M986 399.5V396.5H994V404.5H991.5" class="ic" stroke-width="1"/>

<rect x="870" y="418" width="154" height="1" fill="#44647e"/>
<rect x="870" y="419" width="154" height="14" fill="#3d3a38"/>
<text class="t" x="936" y="429">Brush Size</text><use href="#popx" x="1003" y="422"/>
<rect x="871" y="433" width="137" height="165" fill="#4a4846"/>
<g fill="#5a5856">
<rect x="871" y="433" width="28" height="35"/><rect x="900" y="433" width="27.5" height="35"/><rect x="928" y="433" width="28" height="35"/><rect x="957" y="433" width="27.5" height="35"/>
<rect x="871" y="469" width="28" height="34"/><rect x="900" y="469" width="27.5" height="34"/><rect x="928" y="469" width="28" height="34"/><rect x="957" y="469" width="27.5" height="34"/>
<rect x="871" y="504" width="28" height="35"/><rect x="900" y="504" width="27.5" height="35"/><rect x="928" y="504" width="28" height="35"/><rect x="957" y="504" width="27.5" height="35"/>
<rect x="871" y="540" width="28" height="35"/><rect x="900" y="540" width="27.5" height="35"/><rect x="928" y="540" width="28" height="35"/><rect x="957" y="540" width="27.5" height="35"/>
<rect x="871" y="576" width="28" height="22"/><rect x="900" y="576" width="27.5" height="22"/><rect x="928" y="576" width="28" height="22"/><rect x="957" y="576" width="27.5" height="22"/>
</g>
<g fill="#f0f0f0">
<circle cx="884" cy="447" r=".3"/><circle cx="913" cy="447" r=".5"/><circle cx="941" cy="447" r=".8"/><circle cx="970" cy="447" r="1.2"/>
<circle cx="884" cy="482" r="1.6"/><circle cx="913" cy="482" r="2"/><circle cx="941" cy="482" r="2.8"/><circle cx="970" cy="482" r="4"/>
<circle cx="884" cy="518" r="4.5"/><circle cx="913" cy="518" r="5.5"/><circle cx="941" cy="518" r="7.3"/><circle cx="970" cy="518" r="8.8"/>
<circle cx="884" cy="554" r="8.8"/><circle cx="913" cy="554" r="8.8"/><circle cx="941" cy="554" r="8.8"/><circle cx="970" cy="554" r="8.8"/>
<circle cx="884" cy="589" r="8.8"/><circle cx="913" cy="589" r="8.8"/><circle cx="941" cy="589" r="8.8"/><circle cx="970" cy="589" r="8.8"/>
</g>
<text class="m" x="884" y="467" style="font-size:8px">1</text><text class="m" x="913" y="467" style="font-size:8px">1.5</text><text class="m" x="941" y="467" style="font-size:8px">2</text><text class="m" x="970" y="467" style="font-size:8px">3</text>
<text class="m" x="884" y="502" style="font-size:8px">4</text><text class="m" x="913" y="502" style="font-size:8px">5</text><text class="m" x="941" y="502" style="font-size:8px">7</text><text class="m" x="970" y="502" style="font-size:8px">10</text>
<text class="m" x="884" y="537" style="font-size:8px">12</text><text class="m" x="913" y="537" style="font-size:8px">15</text><text class="m" x="941" y="537" style="font-size:8px">20</text><text class="m" x="970" y="537" style="font-size:8px">25</text>
<text class="m" x="884" y="573" style="font-size:8px">30</text><text class="m" x="913" y="573" style="font-size:8px">40</text><text class="m" x="941" y="573" style="font-size:8px">50</text><text class="m" x="970" y="573" style="font-size:8px">70</text>
<rect x="1009" y="433" width="13" height="165" fill="#2c2c2c"/><path d="M1015.5 434L1013 438H1018Z" fill="#aaa"/><path d="M1015.5 597L1013 593H1018Z" fill="#aaa"/>
<rect x="1010" y="442" width="12" height="113" rx="3" fill="#666"/>
</svg>
</body></html>
